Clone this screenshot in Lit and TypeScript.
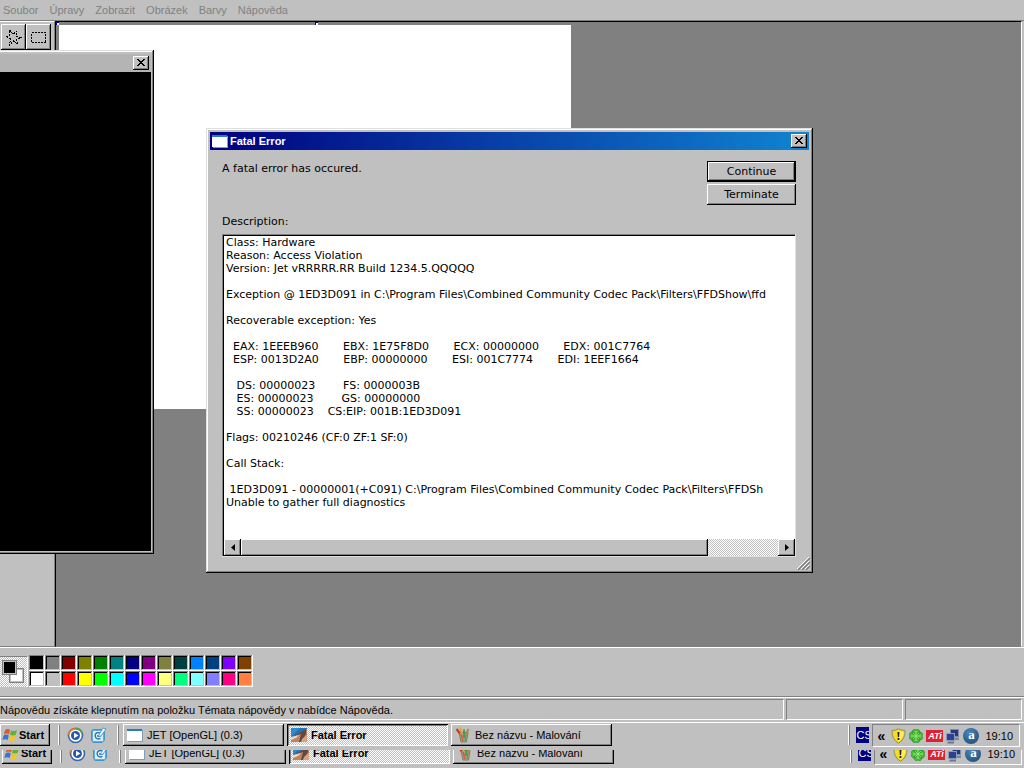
import { LitElement, html, css, svg } from "lit";
import { customElement, property } from "lit/decorators.js";
import { classMap } from "lit/directives/class-map.js";

const base = css`
  * { box-sizing: border-box; }
  button, textarea {
    font: inherit;
    color: inherit;
    margin: 0;
    padding: 0;
    border: 0;
    border-radius: 0;
    background: none;
    outline: none;
  }
  .raised {
    background: #c0c0c0;
    box-shadow: inset -1px -1px #000, inset 1px 1px #fff, inset -2px -2px #808080;
  }
  .dither {
    background: conic-gradient(#fff 25%, #c0c0c0 0 50%, #fff 0 75%, #c0c0c0 0) 0 0 / 2px 2px;
  }
  svg { display: block; flex: none; }
`;

const closeIcon = svg`<svg width="16" height="14" viewBox="0 0 16 14" shape-rendering="crispEdges">
  <path fill="#000" d="M4 3h2v1h1v1h2v-1h1v-1h2v1h-1v1h-1v1h-1v1h1v1h1v1h1v1h-2v-1h-1v-1h-2v1h-1v1h-2v-1h1v-1h1v-1h1v-1h-1v-1h-1v-1h-1z"/></svg>`;

const formIcon = svg`<svg width="16" height="14" viewBox="0 0 16 14" shape-rendering="crispEdges">
  <rect x="0" y="1" width="15" height="12" fill="#fff"/><rect x="0" y="1" width="15" height="2" fill="#2b78c8"/>
  <path d="M15 2v11H1" fill="none" stroke="#7f9fb8"/></svg>`;

const flagIcon = svg`<svg width="16" height="16" viewBox="0 0 16 16">
  <path fill="#e4572a" d="M3 3.200Q5.500 1 8 2.800L7 7.400Q4.500 5.800 1.800 7.500Z"/>
  <path fill="#5fb336" d="M9 3.200Q12 5 15 3.100L13.800 7.700Q11 9.300 8 7.800Z"/>
  <path fill="#3674d8" d="M1.600 8.500Q4.300 6.800 6.800 8.400L5.600 13Q3.200 11.300.3 13Z"/>
  <path fill="#f4c61e" d="M7.700 8.900Q10.600 10.300 13.500 8.700L12.300 13.300Q9.300 15 6.500 13.300Z"/></svg>`;

const playerIcon = svg`<svg width="17" height="17" viewBox="0 0 17 17">
  <circle cx="8.500" cy="8.500" r="7" fill="#fff" stroke="#3b66a8" stroke-width="1.600"/>
  <path d="M1.500 8A7 7 0 0 1 8.500 1.500" fill="none" stroke="#d9793c" stroke-width="1.800"/>
  <path d="M8.500 1.500A7 7 0 0 1 15 6" fill="none" stroke="#5c9c48" stroke-width="1.800"/>
  <circle cx="8.500" cy="8.500" r="4.500" fill="#2757ad"/><path d="M7 5.800L11.500 8.500L7 11.200Z" fill="#fff"/></svg>`;

const desktopIcon = svg`<svg width="17" height="17" viewBox="0 0 17 17">
  <path d="M3 2H13L15 5V13L12 16H3L1 13V4Z" fill="#3f97cf"/>
  <path d="M3 4H11L13 6V14H3Z" fill="#e8f5fb" stroke="#b8dcee" stroke-width=".6"/>
  <path d="M10.500 6Q5 4.500 5.200 9Q5.800 13 10.500 11.500M7 9H10.500V7.500" fill="none" stroke="#2877b5" stroke-width="1.500"/>
  <path d="M13 1L16 2L11 9L8.500 10L9.200 7.500Z" fill="#f2fbff" stroke="#3c8cc0" stroke-width=".8"/></svg>`;

const jetIcon = svg`<svg width="16" height="14" viewBox="0 0 16 14">
  <rect width="16" height="14" fill="#2373b8"/><path d="M0 0H9L0 9Z" fill="#2f8bd0"/>
  <path d="M0 10L16 1V14H0Z" fill="#c5825a"/><path d="M1 9L15 1V6L10 14H8L10 6Z" fill="#5b4b4b"/>
  <path d="M0 9L8 7L5 10L0 12Z" fill="#e8d8cc"/><path d="M11 11L16 7V14H10Z" fill="#dba27c"/></svg>`;

const paintIcon = svg`<svg width="16" height="16" viewBox="0 0 16 16">
  <path d="M4 5.500H13L11.500 15H6Z" fill="#a9b0a0" stroke="#66705c" stroke-width=".8"/>
  <path d="M1.500 2L5 6.500" stroke="#c83b22" stroke-width="2.200"/><path d="M5 .5L7 7" stroke="#d9a934" stroke-width="2"/>
  <path d="M13.500 2L10.500 8" stroke="#b28a3c" stroke-width="2"/><path d="M9 2.500V11" stroke="#2d9a50" stroke-width="1.600"/>
  <path d="M6 7L8 14" stroke="#d4603c" stroke-width="2"/><path d="M11 8L10 14" stroke="#7a8f3c" stroke-width="1.400"/></svg>`;

const shieldIcon = svg`<svg width="15" height="16" viewBox="0 0 15 16">
  <path d="M7.500.8Q10 2.500 14 2.500Q14.500 11 7.500 15.300Q.5 11 1 2.500Q5 2.500 7.500.8Z" fill="#f5dc1c" stroke="#8b8b70"/>
  <path d="M7.500 2.500Q9.500 3.800 12.500 4Q12.500 10 7.500 13.500Z" fill="#ffee58"/>
  <path d="M6.500 4h2l-.4 5h-1.200zM6.600 10h1.800v2h-1.800z" fill="#222"/></svg>`;

const cloverIcon = svg`<svg width="16" height="16" viewBox="0 0 16 16">
  <g fill="#52c83a" stroke="#23891d" stroke-width=".8">
  <path id="p" d="M8 8L4.500 3Q5 .5 8 2Q11 .5 11.500 3Z"/>
  <path d="M8 8L13 4.500Q15.500 5 14 8Q15.500 11 13 11.500Z"/>
  <path d="M8 8L11.500 13Q11 15.500 8 14Q5 15.500 4.500 13Z"/>
  <path d="M8 8L3 11.500Q.5 11 2 8Q.5 5 3 4.500Z"/></g>
  <path d="M3.500 3.500L12.500 12.500M12.500 3.500L3.500 12.500" stroke="#35a528" stroke-width="2.400"/>
  <path d="M8 3V13M3 8H13M5 5L11 11M11 5L5 11" stroke="#a8ec88" stroke-width=".8"/></svg>`;

const networkIcon = svg`<svg width="16" height="16" viewBox="0 0 16 16">
  <rect x="5.500" y="1.500" width="8" height="7" fill="#26377e" stroke="#7d8ba8"/><path d="M9 9.500H14V12H9Z" fill="#7c88a0"/>
  <rect x="1.500" y="5.500" width="8" height="7" fill="#2c3f92" stroke="#8e9bb5"/><path d="M3 13.500H9V15.500H2Z" fill="#6b7690"/></svg>`;

@customElement("task-bar")
export class TaskBar extends LitElement {
  @property({ type: Boolean }) shifted = false;

  static styles = [base, css`
    :host { display: block; }
    .bar {
      display: flex;
      align-items: flex-start;
      height: 27px;
      padding: 1px 4px 0 0;
      background: #c0c0c0;
      line-height: 14px;
    }
    .shifted { padding-left: 2px; padding-right: 2px; }
    button { display: flex; align-items: center; height: 22px; white-space: nowrap; }
    .start { width: 50px; padding-left: 2px; gap: 1px; font-weight: bold; }
    .sep { width: 2px; height: 20px; margin-top: 1px; background: #fff; border-right: 1px solid #808080; }
    .quick { display: flex; gap: 6px; margin: 0 10px 0 7px; }
    .s1 { margin-left: 8px; }
    .tasks { display: flex; flex: 1; gap: 3px; margin-left: 4px; min-width: 0; }
    .task { flex: 0 1 161px; padding-left: 4px; gap: 4px; }
    .active {
      font-weight: bold;
      box-shadow: inset 1px 1px #000, inset -1px -1px #fff, inset 2px 2px #808080;
    }
    .lang { width: 13px; height: 16px; margin: 3px 3px 0 6px; overflow: hidden; background: #000080; color: #fff; line-height: 16px; }
    .tray {
      display: flex;
      align-items: center;
      gap: 2px;
      height: 23px;
      padding: 0 6px 0 4px;
      border: 1px solid;
      border-color: #808080 #fff #fff #808080;
    }
    .more { width: 12px; font-size: 14px; font-weight: bold; }
    .ati { width: 17px; height: 12px; background: #df2030; color: #fff; font: italic bold 9px/12px "Liberation Sans", sans-serif; text-align: center; }
    .a { width: 16px; height: 16px; border-radius: 50%; background: radial-gradient(circle at 40% 30%, #4f86b5, #154873); color: #fff; font: bold 13px/14px "Liberation Serif", serif; text-align: center; }
    .time { margin-left: 4px; }
  `];

  render() {
    return html`<div class=${classMap({ bar: true, shifted: this.shifted })}>
      <button class="start raised">${flagIcon}Start</button>
      <div class="sep s1"></div>
      <div class="quick">
        <button aria-label="Media player">${playerIcon}</button>
        <button aria-label="Show desktop">${desktopIcon}</button>
      </div>
      <div class="sep"></div>
      <div class="tasks">
        <button class="task raised">${formIcon}JET [OpenGL] (0.3)</button>
        <button class="task active dither">${jetIcon}Fatal Error</button>
        <button class="task raised">${paintIcon}Bez názvu - Malování</button>
      </div>
      <div class="sep"></div>
      <div class="lang">CS</div>
      <div class="tray">
        <span class="more">«</span>
        ${shieldIcon}${cloverIcon}
        <span class="ati">ATi</span>
        ${networkIcon}
        <span class="a">a</span>
        <span class="time">19:10</span>
      </div>
    </div>`;
  }
}

const report = [
  "Class: Hardware",
  "Reason: Access Violation",
  "Version: Jet vRRRRR.RR Build 1234.5.QQQQQ",
  "",
  "Exception @ 1ED3D091 in C:\\Program Files\\Combined Community Codec Pack\\Filters\\FFDShow\\ffd",
  "",
  "Recoverable exception: Yes",
  "",
  "  EAX: 1EEEB960       EBX: 1E75F8D0       ECX: 00000000       EDX: 001C7764",
  "  ESP: 0013D2A0       EBP: 00000000       ESI: 001C7774       EDI: 1EEF1664",
  "",
  "   DS: 00000023        FS: 0000003B",
  "   ES: 00000023        GS: 00000000",
  "   SS: 00000023    CS:EIP: 001B:1ED3D091",
  "",
  "Flags: 00210246 (CF:0 ZF:1 SF:0)",
  "",
  "Call Stack:",
  "",
  " 1ED3D091 - 00000001(+C091) C:\\Program Files\\Combined Community Codec Pack\\Filters\\FFDSh",
  "Unable to gather full diagnostics",
].join("\n");

@customElement("error-dialog")
export class ErrorDialog extends LitElement {
  static styles = [base, css`
    :host { display: block; font: 11px/13px "DejaVu Sans", sans-serif; }
    .dialog {
      position: relative;
      display: flex;
      flex-direction: column;
      height: 100%;
      padding: 4px;
      background: #c0c0c0;
      box-shadow: inset -1px -1px #000, inset 1px 1px #dfdfdf, inset -2px -2px #808080, inset 2px 2px #fff;
    }
    .title {
      display: flex;
      align-items: center;
      gap: 2px;
      height: 18px;
      padding: 0 2px;
      background: linear-gradient(90deg, #000080, #1084d0);
      color: #fff;
      font: bold 11px/18px "Liberation Sans", sans-serif;
    }
    .name { flex: 1; }
    .body { display: flex; flex-direction: column; flex: 1; min-height: 0; padding: 11px 13px 12px 12px; }
    .top { display: flex; justify-content: space-between; line-height: 15px; }
    .buttons { display: flex; flex-direction: column; gap: 2px; width: 89px; line-height: 13px; }
    .buttons button { height: 21px; }
    .default { border: 1px solid #000; }
    label { margin: 10px 0 6px; }
    .edit {
      display: flex;
      flex-direction: column;
      flex: 1;
      min-height: 0;
      padding: 2px 1px 1px 2px;
      background: #fff;
      box-shadow: inset -1px -1px #dfdfdf, inset 1px 1px #808080, inset 2px 2px #000;
    }
    textarea { display: block; flex: 1; width: 100%; padding: 0 2px; resize: none; overflow: hidden; white-space: pre; }
    .scroll { display: flex; height: 17px; }
    .arrow { display: flex; align-items: center; justify-content: center; width: 17px; }
    .thumb { width: 87%; }
    .track { display: flex; flex: 1; }
    .grip { position: absolute; right: 3px; bottom: 3px; }
  `];

  render() {
    return html`<section class="dialog" role="dialog" aria-label="Fatal Error">
      <div class="title">${formIcon}<span class="name">Fatal Error</span>
        <button class="raised" aria-label="Close">${closeIcon}</button></div>
      <div class="body">
        <div class="top">
          <span>A fatal error has occured.</span>
          <div class="buttons">
            <button class="raised default">Continue</button>
            <button class="raised">Terminate</button>
          </div>
        </div>
        <label for="report">Description:</label>
        <div class="edit">
          <textarea id="report" readonly wrap="off" spellcheck="false" .value=${report}></textarea>
          <div class="scroll">
            <button class="arrow raised" aria-label="Scroll left"><svg width="4" height="7" viewBox="0 0 4 7"><path d="M4 0V7L0 3.500Z"/></svg></button>
            <div class="track dither"><div class="thumb raised"></div></div>
            <button class="arrow raised" aria-label="Scroll right"><svg width="4" height="7" viewBox="0 0 4 7"><path d="M0 0V7L4 3.500Z"/></svg></button>
          </div>
        </div>
      </div>
      <svg class="grip" width="13" height="13" viewBox="0 0 13 13">
        <path d="M1 13L13 1M5 13L13 5M9 13L13 9" stroke="#808080" stroke-width="1.500"/>
        <path d="M0 12L12 0M4 12L12 4M8 12L12 8" stroke="#fff"/></svg>
    </section>`;
  }
}

const colours = [
  "#000", "#808080", "#800000", "#808000", "#008000", "#008080", "#000080", "#800080", "#808040", "#004040", "#0080ff", "#004080", "#8000ff", "#804000",
  "#fff", "#c0c0c0", "#f00", "#ff0", "#0f0", "#0ff", "#00f", "#f0f", "#ffff80", "#00ff80", "#80ffff", "#8080ff", "#ff0080", "#ff8040",
];

@customElement("app-root")
export class AppRoot extends LitElement {
  static styles = [base, css`
    :host {
      display: flex;
      flex-direction: column;
      position: relative;
      height: 100vh;
      overflow: hidden;
      background: #c0c0c0;
      color: #000;
      font: 11px/14px "Liberation Sans", sans-serif;
    }
    .menu { display: flex; gap: 11px; height: 21px; padding-left: 3px; border-bottom: 1px solid #808080; color: #808080; }
    .work { display: flex; flex: 1; min-height: 0; padding-right: 2px; }
    .tools { display: flex; align-items: flex-start; width: 55px; padding: 2px 0 0 1px; border-top: 1px solid #fff; border-right: 1px solid #808080; border-bottom: 1px solid #808080; }
    .tool { display: flex; align-items: center; justify-content: center; width: 25px; height: 26px; }
    .area { flex: 1; padding: 3px; background: #808080; border: 1px solid; border-color: #000 #fff #808080 #000; }
    .sheet { width: 512px; height: 384px; background: #fff; position: relative; }
    .handle { position: absolute; top: -3px; width: 3px; height: 3px; background: #fff; border: solid #000080; border-width: 1px 0 0 1px; }
    .h1 { left: -3px; }
    .h2 { left: 50%; }
    .palette { display: flex; height: 50px; padding-top: 8px; border-top: 1px solid #fff; border-bottom: 1px solid #808080; }
    .current { position: relative; width: 28px; height: 31px; border-top: 1px solid #808080; border-right: 1px solid #fff; }
    .chip { position: absolute; width: 15px; height: 15px; border: 1px solid #808080; box-shadow: inset 0 0 0 1px #c0c0c0; }
    .front { left: 2px; top: 3px; background: #000; }
    .back { left: 9px; top: 11px; background: #fff; }
    .grid { display: grid; grid-template-columns: repeat(14, 16px); grid-auto-rows: 16px; margin: -1px 0 0 1px; }
    .colour { box-shadow: inset -1px -1px #fff, inset 1px 1px #808080, inset -2px -2px #c0c0c0, inset 2px 2px #000; }
    .status { display: flex; gap: 2px; height: 26px; padding: 1px 2px 2px 0; border-top: 1px solid #fff; border-bottom: 1px solid #fff; }
    .pane { flex: 0 0 117px; border: 1px solid; border-color: #808080 #fff #fff #808080; line-height: 21px; white-space: nowrap; }
    .wide { flex: 1; border-left: 0; min-width: 0; }
    .echo { display: flex; flex-direction: column; justify-content: flex-end; height: 18px; overflow: hidden; }
    .game {
      position: absolute;
      left: 0;
      top: 50px;
      width: 154px;
      height: 504px;
      display: flex;
      flex-direction: column;
      padding: 4px 3px 3px 0;
      background: #c0c0c0;
      box-shadow: inset -1px -1px #000, inset 0 1px #dfdfdf, inset -2px -2px #808080, inset 0 2px #fff;
    }
    .caption { display: flex; align-items: center; justify-content: flex-end; height: 18px; padding-right: 2px; background: #b4b4b4; }
    .screen { flex: 1; background: #000; }
    .error { position: absolute; left: 206px; right: 211px; top: 128px; height: 445px; }
  `];

  render() {
    return html`
      <nav class="menu">${["Soubor", "Úpravy", "Zobrazit", "Obrázek", "Barvy", "Nápověda"].map((m) => html`<button>${m}</button>`)}</nav>
      <main class="work">
        <div class="tools">
          <button class="tool raised" aria-label="Free-form select"><svg width="17" height="17" viewBox="0 0 17 17" shape-rendering="crispEdges">
            <path d="M4.500 1L8 5L12 2.500L11 7L16 8.500L11.500 11L12.500 15L8.500 12L4.500 16L5.500 10L1 8L4.500 6Z" fill="none" stroke="#000" stroke-dasharray="2 1"/></svg></button>
          <button class="tool raised" aria-label="Select"><svg width="17" height="13" viewBox="0 0 17 13" shape-rendering="crispEdges">
            <rect x="1.500" y="1.500" width="14" height="10" fill="none" stroke="#000" stroke-dasharray="2 1"/></svg></button>
        </div>
        <div class="area"><div class="sheet"><i class="handle h1"></i><i class="handle h2"></i></div></div>
      </main>
      <div class="palette">
        <div class="current dither"><i class="chip back"></i><i class="chip front"></i></div>
        <div class="grid">${colours.map((c) => html`<button class="colour" aria-label=${c} style="background:${c}"></button>`)}</div>
      </div>
      <footer class="status">
        <div class="pane wide">Nápovědu získáte klepnutím na položku Témata nápovědy v nabídce Nápověda.</div>
        <div class="pane"></div>
        <div class="pane"></div>
      </footer>
      <task-bar></task-bar>
      <div class="echo" aria-hidden="true"><task-bar shifted></task-bar></div>
      <section class="game" aria-label="JET">
        <div class="caption"><button class="raised" aria-label="Close">${closeIcon}</button></div>
        <div class="screen"></div>
      </section>
      <error-dialog class="error"></error-dialog>
    `;
  }
}
